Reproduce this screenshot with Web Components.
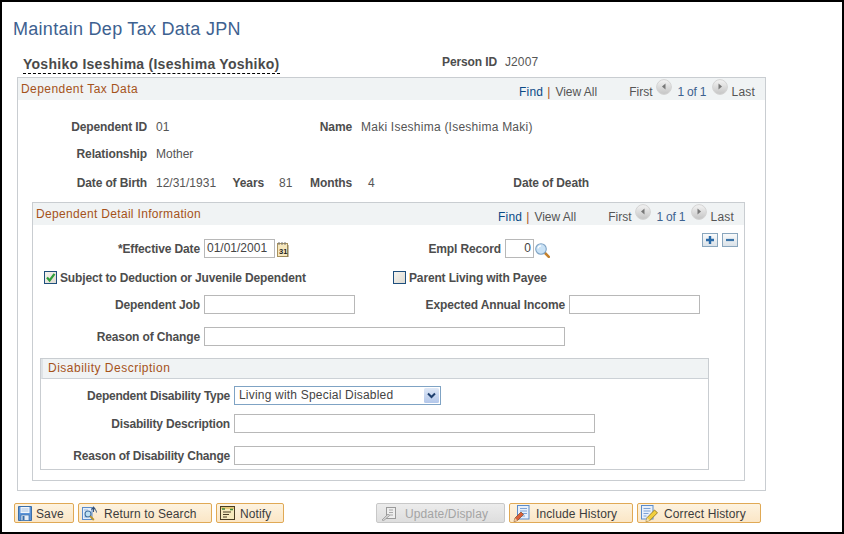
<!DOCTYPE html>
<html><head><meta charset="utf-8"><title>Maintain Dep Tax Data JPN</title>
<style>html,body{margin:0;padding:0;background:#fff}</style></head><body>
<ps-app>
  <ps-title>Maintain Dep Tax Data JPN</ps-title>
  <ps-person name="Yoshiko Iseshima (Iseshima Yoshiko)" pid="J2007"></ps-person>
  <ps-section heading="Dependent Tax Data" nav style="--mx:15px;--sw:749px;--mt:3px;--pb:9px;--hh:22px;--ts:.44px">
    <ps-row style="--mt:17px">
      <ps-label style="--w:129px">Dependent ID</ps-label><ps-val style="--w:172px">01</ps-val>
      <ps-label style="--w:33px">Name</ps-label><ps-val style="--ls:.24px">Maki Iseshima (Iseshima Maki)</ps-val>
    </ps-row>
    <ps-row style="--mt:8px">
      <ps-label style="--w:129px">Relationship</ps-label><ps-val>Mother</ps-val>
    </ps-row>
    <ps-row style="--mt:10px">
      <ps-label style="--w:129px">Date of Birth</ps-label><ps-val style="--w:85px">12/31/1931</ps-val>
      <ps-label style="--w:32px">Years</ps-label><ps-val style="--w:46px;--p:15px">81</ps-val>
      <ps-label style="--w:42px">Months</ps-label><ps-val style="--w:161px;--p:16px">4</ps-val>
      <ps-label style="--w:76px">Date of Death</ps-label>
    </ps-row>
    <ps-section heading="Dependent Detail Information" nav style="--mx:14px;--sw:713px;--mt:10px;--pb:10px;--hh:22px;--ts:.32px">
      <ps-row style="--h:25px;--al:flex-end;--mt:8px">
        <ps-label style="--w:167px;--lb:2px">*Effective Date</ps-label>
        <ps-input style="--w:71px;--ml:4px">01/01/2001</ps-input>
        <ps-icon name="cal" style="--ml:2px;--iw:12px;--ih:15px;--mb:1px"></ps-icon>
        <ps-label style="--w:212px;--lb:2px">Empl Record</ps-label>
        <ps-input style="--w:29px;--ml:4px;--ta:right">0</ps-input>
        <ps-icon name="lens" style="--ml:1px;--iw:15px;--ih:15px"></ps-icon>
        <ps-icon name="plus" style="--ml:152px;--iw:16px;--ih:14px;--as:flex-start"></ps-icon>
        <ps-icon name="minus" style="--ml:4px;--iw:16px;--ih:14px;--as:flex-start"></ps-icon>
      </ps-row>
      <ps-row style="--h:14px;--mt:12px">
        <ps-check checked style="--ml:11px;--w:349px">Subject to Deduction or Juvenile Dependent</ps-check>
        <ps-check>Parent Living with Payee</ps-check>
      </ps-row>
      <ps-row style="--mt:11px">
        <ps-label style="--w:167px">Dependent Job</ps-label>
        <ps-input style="--w:151px;--ml:4px"></ps-input>
        <ps-label style="--w:210px">Expected Annual Income</ps-label>
        <ps-input style="--w:131px;--ml:4px"></ps-input>
      </ps-row>
      <ps-row style="--mt:13px">
        <ps-label style="--w:167px">Reason of Change</ps-label>
        <ps-input style="--w:361px;--ml:4px"></ps-input>
      </ps-row>
      <ps-section heading="Disability Description" style="--mx:7px;--sw:669px;--mt:12px;--pb:4px;--hh:20px;--hb:1px solid #ccd1d6;--hl:2px solid #dfe3e6;--tp:5px;--ts:.5px">
        <ps-row style="--mt:7px">
          <ps-label style="--w:189px;--ls:-.25px">Dependent Disability Type</ps-label>
          <ps-select style="--w:207px;--ml:4px">Living with Special Disabled</ps-select>
        </ps-row>
        <ps-row style="--mt:9px">
          <ps-label style="--w:189px;--ls:-.18px">Disability Description</ps-label>
          <ps-input style="--w:361px;--ml:4px"></ps-input>
        </ps-row>
        <ps-row style="--mt:13px">
          <ps-label style="--w:189px;--ls:-.2px">Reason of Disability Change</ps-label>
          <ps-input style="--w:361px;--ml:4px"></ps-input>
        </ps-row>
      </ps-section>
    </ps-section>
  </ps-section>
  <ps-footer>
    <ps-button style="--w:60px;--il:3px;--tl:4px"><ps-icon slot="icon" name="save" style="--iw:14px;--ih:15px"></ps-icon>Save</ps-button>
    <ps-button style="--w:134px;--il:3px;--tl:7px"><ps-icon slot="icon" name="search" style="--iw:15px;--ih:15px"></ps-icon>Return to Search</ps-button>
    <ps-button style="--w:68px;--il:3px;--tl:5px"><ps-icon slot="icon" name="notify" style="--iw:15px;--ih:14px"></ps-icon>Notify</ps-button>
    <ps-button disabled style="--w:129px;--il:4px;--tl:9px;--ms:88px"><ps-icon slot="icon" name="update" style="--iw:15px;--ih:15px"></ps-icon>Update/Display</ps-button>
    <ps-button style="--w:124px;--il:3px;--tl:6px"><ps-icon slot="icon" name="include" style="--iw:17px;--ih:17px"></ps-icon>Include History</ps-button>
    <ps-button style="--w:124px;--il:3px;--tl:6px"><ps-icon slot="icon" name="correct" style="--iw:17px;--ih:17px"></ps-icon>Correct History</ps-button>
  </ps-footer>
</ps-app>
<script>
const FONT='"Liberation Sans",Arial,sans-serif';
function def(tag,html,init){
  customElements.define(tag,class extends HTMLElement{
    constructor(){super();const r=this.attachShadow({mode:'open'});r.innerHTML=typeof html==='function'?html(this):html;}
    connectedCallback(){ if(init) init(this); }
  });
}
def('ps-app',`<style>:host{display:block;width:844px;height:534px;box-sizing:border-box;border:2px solid #000;background:#fff;overflow:hidden;font-family:${FONT};color:#4d4d4d;font-size:12px}
</style><slot></slot>`);
def('ps-title',`<style>:host{display:block;margin:16px 0 0 11px;font:18px/22px ${FONT};color:#3d6190;letter-spacing:.28px;white-space:nowrap}</style><slot></slot>`);
customElements.define('ps-person',class extends HTMLElement{
  constructor(){super();this.attachShadow({mode:'open'});}
  connectedCallback(){this.shadowRoot.innerHTML=`<style>
  :host{display:flex;height:20px;margin:14px 0 0 21px;white-space:nowrap}
  .n{font:bold 14px/18px ${FONT};color:#4a4a4a;letter-spacing:.26px;border-bottom:1px dashed #000;box-sizing:border-box;height:20px;padding-top:1px;width:257px}
  .l{font:bold 12px/14px ${FONT};color:#4d4d4d;margin:1px 0 0 162px;width:55px;text-align:right;letter-spacing:-.1px}
  .v{font:12px/14px ${FONT};color:#555;margin:1px 0 0 8px;letter-spacing:.1px}
  </style><div class="n">${this.getAttribute('name')}</div><div class="l">Person ID</div><div class="v">${this.getAttribute('pid')}</div>`;}
});
customElements.define('ps-section',class extends HTMLElement{
  constructor(){super();this.attachShadow({mode:'open'});}
  connectedCallback(){
    const nav=this.hasAttribute('nav')?`<ps-nav></ps-nav>`:'';
    this.shadowRoot.innerHTML=`<style>
    :host{display:block;box-sizing:border-box;width:var(--sw);margin:var(--mt,0) 0 0 var(--mx,0);border:1px solid #c9cdd1;padding-bottom:var(--pb,0)}
    header{display:flex;align-items:center;height:var(--hh,22px);box-sizing:border-box;background:#f0f3f4;border-bottom:var(--hb,none);border-left:var(--hl,none);white-space:nowrap}
    .t{font:12px/14px ${FONT};color:#a5521a;letter-spacing:var(--ts,.4px);padding:0 0 1px var(--tp,3px);flex:1}
    </style><header><div class="t">${this.getAttribute('heading')}</div>${nav}</header><slot></slot>`;
  }
});
def('ps-nav',`<style>
:host{display:flex;align-items:center;font:12px/14px ${FONT};color:#555;padding:6px 10px 0 0;white-space:nowrap}
.f{color:#0b4a86;letter-spacing:.2px}.s{color:#a5521a;margin:0 5px 0 4px}
.first{margin-left:32px}.of{color:#3d6190;margin:0 6px;width:28px;letter-spacing:-.2px}
svg{display:block;margin-top:-10px}
</style><span class="f">Find</span><span class="s">|</span><span>View All</span><span class="first">First</span>
<svg width="16" height="16" viewBox="0 0 16 16" style="margin-left:3px"><defs><linearGradient id="g" x1="0" y1="0" x2="0" y2="1"><stop offset="0" stop-color="#f4f4f4"/><stop offset="1" stop-color="#c4c4c4"/></linearGradient></defs><circle cx="8" cy="8" r="7.4" fill="url(#g)" stroke="#d4d4d4"/><path d="M9.5 4.5v6L6 7.5z" fill="#777"/></svg>
<span class="of">1 of 1</span>
<svg width="16" height="16" viewBox="0 0 16 16"><circle cx="8" cy="8" r="7.4" fill="url(#g)" stroke="#d4d4d4"/><path d="M6.5 4.5v6L10 7.5z" fill="#777"/></svg>
<span style="margin-left:4px;letter-spacing:.2px">Last</span>`);
def('ps-row',`<style>:host{display:flex;align-items:var(--al,center);height:var(--h,19px);margin-top:var(--mt,0);white-space:nowrap}</style><slot></slot>`);
def('ps-label',`<style>:host{display:block;width:var(--w);flex:none;text-align:right;font:bold 12px/14px ${FONT};color:#4d4d4d;letter-spacing:var(--ls,-.13px);margin-bottom:var(--lb,0);white-space:nowrap}</style><slot></slot>`);
def('ps-val',`<style>:host{display:block;width:var(--w,auto);flex:none;box-sizing:border-box;padding-left:var(--p,9px);font:12px/14px ${FONT};color:#555;letter-spacing:var(--ls,0);white-space:nowrap}</style><slot></slot>`);
def('ps-input',`<style>:host{display:block;flex:none;box-sizing:border-box;width:var(--w);height:19px;margin-left:var(--ml,0);border:1px solid #b8b8b8;background:#fff;font:12px/17px ${FONT};color:#444;padding:0 2px;text-align:var(--ta,left);white-space:nowrap;overflow:hidden}</style><slot></slot>`);
def('ps-select',`<style>:host{display:flex;flex:none;box-sizing:border-box;align-items:center;width:var(--w);height:19px;margin-left:var(--ml,0);border:1px solid #7fa3c4;background:#fff;font:12px/15px ${FONT};color:#444;padding-left:4px;letter-spacing:.2px;white-space:nowrap}
.t{flex:1}
svg{display:block;margin-right:1px}</style><div class="t"><slot></slot></div>
<svg width="15" height="15" viewBox="0 0 15 15"><defs><linearGradient id="s" x1="0" y1="0" x2="0" y2="1"><stop offset="0" stop-color="#dfe8f6"/><stop offset="1" stop-color="#b3c7ea"/></linearGradient></defs><rect width="15" height="15" rx="1.5" fill="url(#s)"/><path d="M4 5.5l3.5 3.5 3.5-3.5" fill="none" stroke="#20406e" stroke-width="2"/></svg>`);
customElements.define('ps-check',class extends HTMLElement{
  constructor(){super();this.attachShadow({mode:'open'});}
  connectedCallback(){
    const mark=this.hasAttribute('checked')?`<path d="M3 6.5l2.6 3L10.5 2.8" fill="none" stroke="#2e9e3a" stroke-width="2.2"/>`:'';
    this.shadowRoot.innerHTML=`<style>:host{display:flex;flex:none;align-items:center;width:var(--w,auto);margin-left:var(--ml,0);height:14px;font:bold 12px/14px ${FONT};color:#4d4d4d;letter-spacing:-.15px;white-space:nowrap}
    svg{display:block;margin-right:3px}span{margin-top:2px}</style>
    <svg width="13" height="13" viewBox="0 0 13 13"><defs><linearGradient id="c" x1="0" y1="0" x2="1" y2="1"><stop offset="0" stop-color="#f7f5f0"/><stop offset="1" stop-color="#dcd9d0"/></linearGradient></defs><rect x=".5" y=".5" width="12" height="12" fill="url(#c)" stroke="#1f4f7d"/>${mark}</svg><span><slot></slot></span>`;
  }
});
const ICONS={
 cal:`<svg viewBox="0 0 12 15"><rect x=".5" y="1.5" width="10" height="13" fill="#f6e7bd" stroke="#a8925f"/><path d="M11 3v12H3" fill="none" stroke="#8a7a50"/><path d="M2 0v3M5 0v3M8 0v3" stroke="#777"/><text x="2" y="11.5" font-family="Liberation Sans" font-size="7.5" font-weight="bold" fill="#222">31</text></svg>`,
 lens:`<svg viewBox="0 0 15 15"><path d="M9.5 9.5l4.3 4.3" stroke="#c4802c" stroke-width="2.6" stroke-linecap="round"/><circle cx="6" cy="6" r="5.3" fill="#c9e2f6" stroke="#7fa3c4" stroke-width="1.1"/><path d="M3 5.5a3 3 0 0 1 3-2.6" fill="none" stroke="#fff" stroke-width="1.2"/></svg>`,
 plus:`<svg viewBox="0 0 16 14"><defs><linearGradient id="b" x1="0" y1="0" x2="0" y2="1"><stop offset="0" stop-color="#fafbfb"/><stop offset="1" stop-color="#d9e1e8"/></linearGradient></defs><rect x=".5" y=".5" width="15" height="13" fill="url(#b)" stroke="#8aa6bd"/><path d="M8 3v8M4 7h8" stroke="#2a6aa8" stroke-width="2.4"/></svg>`,
 minus:`<svg viewBox="0 0 16 14"><defs><linearGradient id="m" x1="0" y1="0" x2="0" y2="1"><stop offset="0" stop-color="#fafbfb"/><stop offset="1" stop-color="#d9e1e8"/></linearGradient></defs><rect x=".5" y=".5" width="15" height="13" fill="url(#m)" stroke="#8aa6bd"/><path d="M4 7h8" stroke="#3b74a8" stroke-width="2.2"/></svg>`,
 save:`<svg viewBox="0 0 14 15"><path d="M.5 .5h13v14h-13z" fill="#5b93d8" stroke="#3a6ea8"/><rect x="2.5" y="1" width="9" height="6" fill="#f2f6fb"/><path d="M3.5 3h7M3.5 5h7" stroke="#a8c3e4"/><rect x="3" y="9" width="8" height="5.5" fill="#e6edf6" stroke="#3a6ea8" stroke-width=".7"/><rect x="4.5" y="10" width="2" height="4" fill="#3a6ea8"/></svg>`,
 search:`<svg viewBox="0 0 15 15"><rect x=".5" y="1.5" width="9.5" height="12" fill="#e4eefa" stroke="#5b8ccb"/><path d="M2 4h4M2 11h3" stroke="#9ab8de"/><circle cx="6" cy="8" r="3" fill="#bfe0f2" stroke="#3f6f9f" stroke-width="1.1"/><path d="M8.2 10.2l3.6 3.8" stroke="#b8942c" stroke-width="1.9"/><path d="M11.5 6V2M9.5 3.6l2-2.4 2 2.4" fill="none" stroke="#33517a" stroke-width="1.1"/><path d="M12.8 3.5c1.4.6 1.8 2 1.6 3" fill="none" stroke="#33517a"/></svg>`,
 notify:`<svg viewBox="0 0 15 14"><rect x=".5" y=".5" width="14" height="13" fill="#f7e9bd" stroke="#4a3c22"/><path d="M1 1h13v2H1z" fill="#e4c878"/><path d="M2 3h3M10 3.5h3" stroke="#3f8a3f" stroke-width="1.4"/><path d="M3 6h8M3 8.5h6M3 11h4" stroke="#4a3c22"/></svg>`,
 update:`<svg viewBox="0 0 15 15"><rect x="5.5" y="1.5" width="9" height="11" fill="#eee" stroke="#9a9a9a"/><path d="M8 4h4M8 6.5h4M8 9h4" stroke="#a8a8a8"/><path d="M1 14l6-6 1.6 1.6-6 5z" fill="#d4d4d4" stroke="#999" stroke-width=".8"/></svg>`,
 include:`<svg viewBox="0 0 17 17"><rect x="4.5" y=".5" width="11.5" height="13.5" fill="#e8f0fb" stroke="#5b8ccb"/><path d="M7 3.5h7M7 6h7M7 8.5h7M7 11h5" stroke="#7da3d6"/><path d="M1 16.5l1-3.5 6-6 2.5 2.5-6 6z" fill="#d9603a" stroke="#7a4a2c" stroke-width=".7"/><path d="M1 16.5l1-3.5 2.5 2.5z" fill="#eecb9a"/></svg>`,
 correct:`<svg viewBox="0 0 17 17"><rect x=".5" y=".5" width="11.5" height="13.5" fill="#e8f0fb" stroke="#5b8ccb"/><path d="M2.5 3.5h7M2.5 6h7M2.5 8.5h5M2.5 11h3" stroke="#7da3d6"/><path d="M5 16.5l1-3.8 7.5-7.7 3 2.8-7.6 7.6z" fill="#f2cf3d" stroke="#8a6c1c" stroke-width=".8"/><path d="M5 16.5l1-3.8 2.9 2.9z" fill="#f2dcb0"/></svg>`
};
customElements.define('ps-icon',class extends HTMLElement{
  constructor(){super();this.attachShadow({mode:'open'});}
  connectedCallback(){this.shadowRoot.innerHTML=`<style>:host{display:block;flex:none;width:var(--iw);height:var(--ih);margin-left:var(--ml,0);margin-bottom:var(--mb,0);align-self:var(--as,auto)}svg{display:block;width:100%;height:100%}</style>${ICONS[this.getAttribute('name')]}`;}
});
customElements.define('ps-button',class extends HTMLElement{
  constructor(){super();this.attachShadow({mode:'open'});}
  connectedCallback(){
    const d=this.hasAttribute('disabled');
    this.shadowRoot.innerHTML=`<style>
    :host{display:flex;flex:none;align-items:center;box-sizing:border-box;width:var(--w);height:20px;margin-left:var(--ms,0);padding-left:var(--il,3px);
      border:1px solid ${d?'#c8c8c8':'#e0a955'};border-radius:2px;background:${d?'linear-gradient(#ececec,#dedede)':'linear-gradient(#fdf3e0,#fbe6c6)'};
      font:12px/14px ${FONT};color:${d?'#a4a4a4':'#3c3c3c'};letter-spacing:.12px;white-space:nowrap}
    span{margin:1px 0 0 var(--tl,4px)}</style><slot name="icon"></slot><span><slot></slot></span>`;
  }
});
def('ps-footer',`<style>:host{display:flex;gap:4px;margin:12px 0 0 12px;height:20px}</style><slot></slot>`);
</script>
</body></html>
